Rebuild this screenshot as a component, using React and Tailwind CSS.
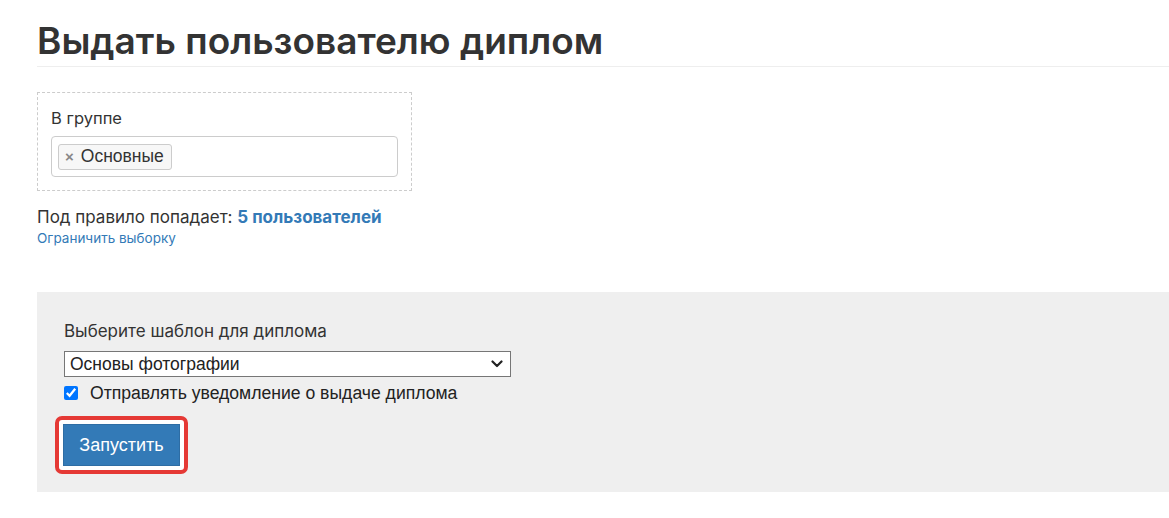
import React from 'react';

const sans = "font-['Inter','Noto_Sans',sans-serif]";
const arial = "font-['Liberation_Sans',Arial,sans-serif]";

function GroupFilter() {
  return (
    <div className="w-[375px] border border-dashed border-[#cccccc] px-[13px] pt-[13px] pb-[13px]">
      <div className={`${sans} text-[16.5px] leading-[24px] text-[#333]`}>В группе</div>
      <div className="mt-[6px] h-[41px] border border-[#cccccc] rounded-[4px] bg-white flex items-center px-[6px]">
        <span className={`${arial} inline-flex items-center h-[26px] border border-[#cccccc] rounded-[3px] bg-[#f7f7f7] pl-[6px] pr-[7px] text-[17.5px] text-[#333]`}>
          <span className="text-[#888] text-[15px] font-bold mr-[7px] leading-none">×</span>
          Основные
        </span>
      </div>
    </div>
  );
}

export default function App() {
  return (
    <div className="bg-white min-h-[518px] pl-[37px]">
      <h1 className={`${sans} mt-[18px] text-[37px] leading-[46px] font-semibold text-[#333] pb-[2px] border-b border-[#eeeeee]`}>
        Выдать пользователю диплом
      </h1>

      <div className="mt-[25px]">
        <GroupFilter />
      </div>

      <div className={`${sans} mt-[14px] text-[17px] leading-[24px] text-[#333]`}>
        Под правило попадает:{' '}
        <a href="#" className="font-bold text-[#337ab7]">5 пользователей</a>
      </div>
      <div className={`${sans} text-[13.5px] leading-[18px]`}>
        <a href="#" className="text-[#337ab7]">Ограничить выборку</a>
      </div>

      <div className="mt-[45px] bg-[#efefef] h-[200px] pl-[27px] pt-[27px]">
        <div className={`${sans} text-[17px] leading-[24px] text-[#333]`}>Выберите шаблон для диплома</div>
        <div className="relative mt-[8px] w-[447px]">
          <select
            defaultValue="photo"
            className={`${arial} appearance-none w-full h-[26px] bg-white border border-[#767676] pl-[5px] pr-[24px] text-[17.5px] leading-[22px] text-[#222] outline-none`}
          >
            <option value="photo">Основы фотографии</option>
          </select>
          <svg className="absolute right-[8px] top-[9px] pointer-events-none" width="12" height="8" viewBox="0 0 12 8">
            <path d="M1.5 1.5 L6 6 L10.5 1.5" fill="none" stroke="#222" strokeWidth="2.2" strokeLinecap="round" strokeLinejoin="round" />
          </svg>
        </div>
        <label className={`${arial} flex items-center h-[24px] mt-[4px] text-[17.6px] text-[#222]`}>
          <input type="checkbox" defaultChecked className="w-[14px] h-[14px] ml-0 mr-[12px] accent-[#0075ff]" />
          Отправлять уведомление о выдаче диплома
        </label>
        <div className="mt-[11px] -ml-[9px] inline-block border-4 border-[#e53935] rounded-[7px] bg-white p-[4px]">
          <button
            type="button"
            className={`${arial} block w-[117px] h-[42px] bg-[#337ab7] border border-[#2e6da4] text-white text-[18px]`}
          >
            Запустить
          </button>
        </div>
      </div>
    </div>
  );
}
